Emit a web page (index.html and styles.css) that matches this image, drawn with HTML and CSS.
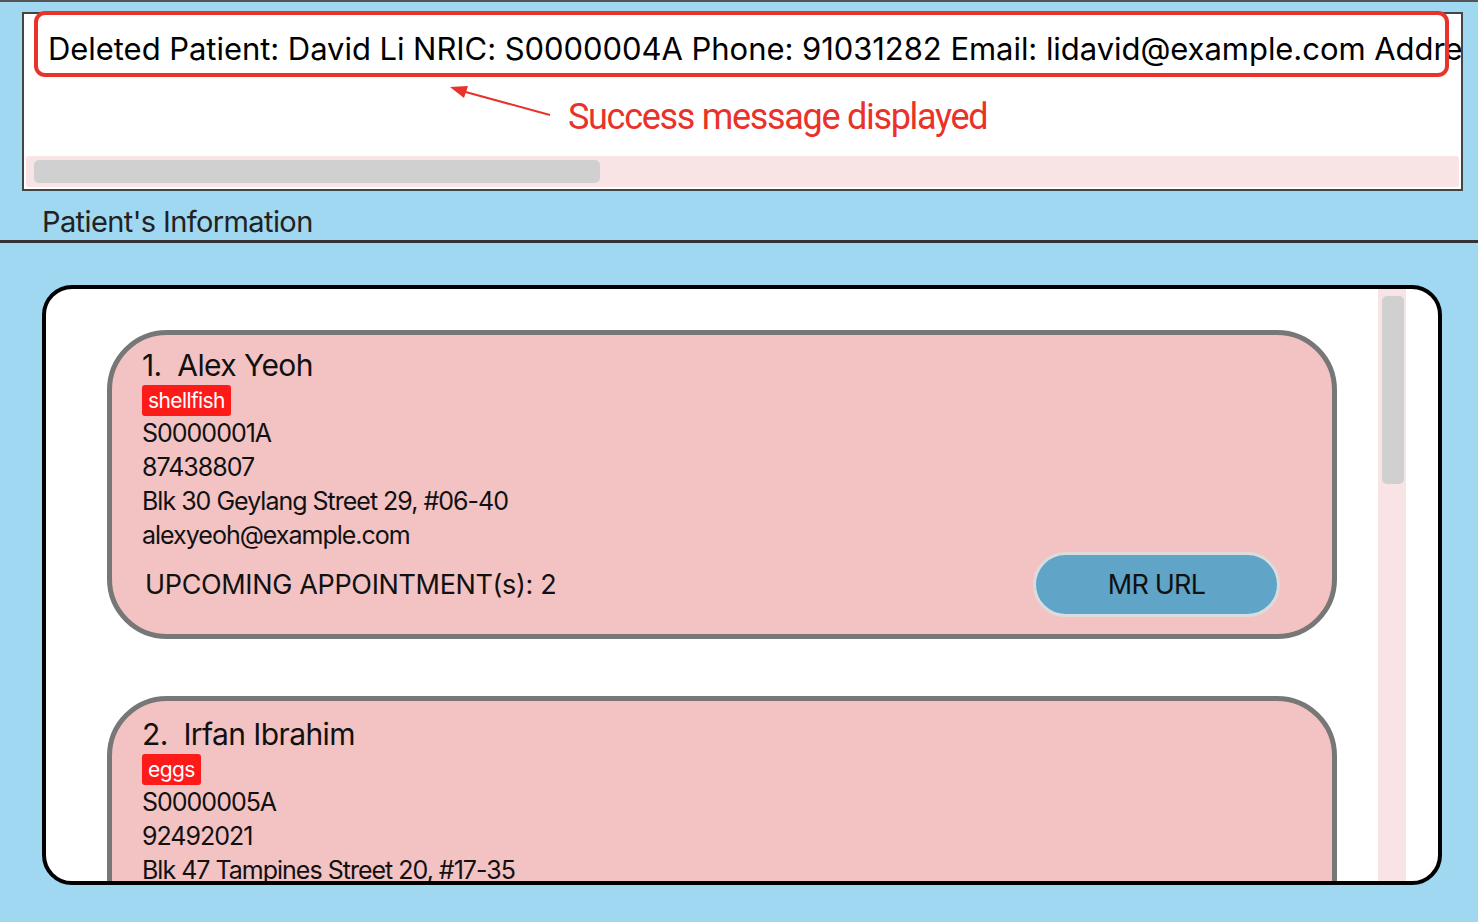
FILE: index.html
```html
<!DOCTYPE html>
<html>
<head>
<meta charset="utf-8">
<link rel="stylesheet" href="styles.css">
</head>
<body>
<div class="result">
  <div class="result-text">Deleted Patient: David Li NRIC: S0000004A Phone: 91031282 Email: lidavid@example.com Address: Blk 436 Serangoon Gardens Street 26, #16-43</div>
  <div class="hscroll"><div class="hthumb"></div></div>
  <div class="annot-box"></div>
</div>
<svg class="annot-arrow" width="110" height="40" viewBox="0 0 110 40">
  <line x1="102" y1="32" x2="14" y2="8" stroke="#e8322a" stroke-width="2"/>
  <polygon points="2,4 20,3 16,15" fill="#e8322a"/>
</svg>
<div class="annot-label">Success message displayed</div>

<div class="section-title">Patient's Information</div>
<div class="divider"></div>

<div class="panel">
  <div class="list">
    <div class="card">
      <div class="name">1.&nbsp; Alex Yeoh</div>
      <div class="tags"><span class="tag">shellfish</span></div>
      <div class="field">S0000001A</div>
      <div class="field">87438807</div>
      <div class="field">Blk 30 Geylang Street 29, #06-40</div>
      <div class="field">alexyeoh@example.com</div>
      <div class="bottom-row">
        <div class="appt">UPCOMING APPOINTMENT(s): 2</div>
        <div class="mr-btn">MR URL</div>
      </div>
    </div>
    <div class="card">
      <div class="name">2.&nbsp; Irfan Ibrahim</div>
      <div class="tags"><span class="tag">eggs</span></div>
      <div class="field">S0000005A</div>
      <div class="field">92492021</div>
      <div class="field">Blk 47 Tampines Street 20, #17-35</div>
      <div class="field">irfan@example.com</div>
      <div class="bottom-row">
        <div class="appt">UPCOMING APPOINTMENT(s): 0</div>
        <div class="mr-btn">MR URL</div>
      </div>
    </div>
  </div>
  <div class="vscroll"><div class="vthumb"></div></div>
</div>
</body>
</html>
```
FILE: styles.css
```css
html, body {
  margin: 0;
  padding: 0;
}
body {
  background: #a0d7f1;
  border-top: 2px solid #555;
  font-family: Inter, Roboto, "Liberation Sans", sans-serif;
  color: #111;
  position: relative;
  height: 920px;
  overflow: hidden;
}
.result {
  position: relative;
  margin: 10px 0 0 22px;
  width: 1441px;
  height: 179px;
  box-sizing: border-box;
  border: 2px solid #444;
  background: #fff;
  display: flex;
  flex-direction: column;
}
.result-text {
  flex: 1;
  padding: 16px 0 0 24px;
  font-size: 31px;
  letter-spacing: -0.05px;
  white-space: nowrap;
  overflow: hidden;
  color: #000;
}
.hscroll {
  height: 31px;
  margin: 0 2px 2px 2px;
  background: #f8e4e4;
  border-radius: 3px;
  padding: 4px 8px;
  box-sizing: border-box;
}
.hthumb {
  width: 566px;
  height: 23px;
  background: #d0d0d0;
  border-radius: 5px;
}
.annot-box {
  position: absolute;
  left: 10px;
  top: -3px;
  width: 1415px;
  height: 66px;
  box-sizing: border-box;
  border: 4px solid #e8322a;
  border-radius: 11px;
}
.annot-arrow {
  position: absolute;
  left: 448px;
  top: 81px;
}
.annot-label {
  position: absolute;
  left: 568px;
  top: 94px;
  font-family: Roboto, "Liberation Sans", sans-serif;
  font-size: 36px;
  letter-spacing: -1.3px;
  color: #e8322a;
}
.section-title {
  height: 49px;
  box-sizing: border-box;
  padding: 13px 0 0 42px;
  font-size: 29px;
  letter-spacing: -0.6px;
  color: #222;
}
.divider {
  height: 3px;
  background: #333;
}
.panel {
  margin: 42px 0 0 42px;
  width: 1400px;
  height: 600px;
  box-sizing: border-box;
  border: 4px solid #000;
  border-radius: 30px;
  background: #fff;
  display: flex;
  overflow: hidden;
}
.list {
  flex: 1;
  overflow: hidden;
  padding: 41px 0 0 61px;
  display: flex;
  flex-direction: column;
  gap: 57px;
}
.card {
  width: 1230px;
  box-sizing: border-box;
  flex-shrink: 0;
  border: 5px solid #777;
  border-radius: 60px;
  background: #f3c2c3;
  padding: 12px 52px 17px 30px;
}
.card + .card {
  padding-top: 15px;
}
.name {
  font-size: 30px;
  letter-spacing: -0.6px;
  line-height: 36px;
}
.tags {
  display: flex;
  margin: 2px 0 0;
}
.tag {
  background: #ff1a1a;
  color: #fff;
  font-size: 21px;
  letter-spacing: -0.6px;
  line-height: 31px;
  padding: 0 6px;
  border-radius: 3px;
}
.field {
  font-size: 25px;
  letter-spacing: -1px;
  line-height: 34px;
}
.bottom-row {
  display: flex;
  justify-content: space-between;
  align-items: center;
  margin-top: 0;
}
.appt {
  font-size: 27px;
  letter-spacing: -0.35px;
  padding-left: 3px;
}
.mr-btn {
  width: 247px;
  height: 65px;
  box-sizing: border-box;
  border: 3px solid #dcdcdc;
  border-radius: 33px;
  background: #60a5c8;
  font-size: 27px;
  letter-spacing: -0.8px;
  display: flex;
  align-items: center;
  justify-content: center;
}
.vscroll {
  width: 28px;
  margin-right: 32px;
  background: #f8e4e4;
  padding: 7px 2px 0 4px;
  box-sizing: border-box;
  flex-shrink: 0;
}
.vthumb {
  height: 188px;
  background: #d0d0d0;
  border-radius: 5px;
}
```
